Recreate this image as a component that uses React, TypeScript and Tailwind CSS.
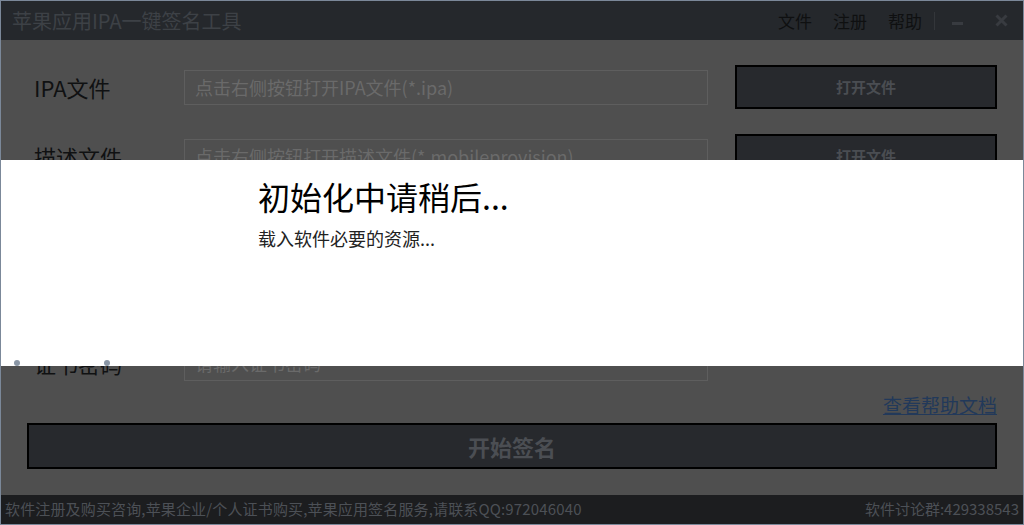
const font = { fontFamily: '"Microsoft YaHei", "Noto Sans CJK SC", "Noto Sans", sans-serif' };

// rows 3 and 4 sit under the loading panel, so they carry no text
const rows = [
  { label: "IPA文件", placeholder: "点击右侧按钮打开IPA文件(*.ipa)", button: true },
  { label: "描述文件", placeholder: "点击右侧按钮打开描述文件(*.mobileprovision)", button: true },
  { label: "", placeholder: "", button: true },
  { label: "", placeholder: "", button: false },
  { label: "证书密码", placeholder: "请输入证书密码", button: false },
];

export default function App() {
  return (
    <div
      className="relative w-[1024px] h-[525px] flex flex-col border border-[#7b8899] bg-[#4f4f4f] overflow-hidden"
      style={font}
    >
      {/* title bar */}
      <div className="h-[39px] shrink-0 flex items-center bg-[#25282c] pl-[11px] pr-[15px]">
        <span className="text-[20px] text-[#3d4146] leading-[28px]">苹果应用IPA一键签名工具</span>
        <div className="ml-auto flex items-center text-[17px] text-[#0f1011]">
          <span>文件</span>
          <span className="ml-[21px]">注册</span>
          <span className="ml-[21px]">帮助</span>
          <span className="ml-[12px] w-px h-[18px] bg-[#33363a]" />
          <span className="ml-[17px] w-[11px] h-[3px] bg-[#383b40] mt-[6px]" />
          <svg className="ml-[32px]" width="13" height="13" viewBox="0 0 13 13">
            <path d="M1.5 1.5L11.5 11.5M11.5 1.5L1.5 11.5" stroke="#383b40" strokeWidth="3" />
          </svg>
        </div>
      </div>

      {/* body */}
      <div className="flex-1 flex flex-col px-[26px] pt-[25px]">
        <div className="flex flex-col gap-[25px] pl-[7px]">
          {rows.map((r, i) => (
            <div key={i} className="h-[44px] flex items-center">
              <span className="w-[150px] text-[22px] text-[#101112]">{r.label}</span>
              <div className="w-[524px] h-[35px] border border-[#5e5e5e] flex items-center px-[10px] text-[18px] text-[#6a6a6a] whitespace-nowrap overflow-hidden">
                {r.placeholder}
              </div>
              {r.button && (
                <div className="ml-[27px] flex-1 h-[44px] border-2 border-black bg-[#27292d] flex items-center justify-center text-[15px] font-bold text-[#4a4d52]">
                  {i < 2 ? "打开文件" : ""}
                </div>
              )}
            </div>
          ))}
        </div>
        <div className="mt-[6px] flex justify-end">
          <span className="text-[19px] leading-[28px] text-[#22395a] underline">查看帮助文档</span>
        </div>
        <div className="mt-[4px] h-[46px] border-2 border-black bg-[#27292d] flex items-center justify-center text-[22px] font-bold text-[#4b4e53]">
          开始签名
        </div>
      </div>

      {/* status bar */}
      <div className="h-[29px] shrink-0 flex items-center justify-between bg-[#1c1d1f] px-[4px] text-[15px] text-[#4c5056]">
        <span className="tracking-[0.15px]">软件注册及购买咨询,苹果企业/个人证书购买,苹果应用签名服务,请联系QQ:972046040</span>
        <span>软件讨论群:429338543</span>
      </div>

      {/* loading overlay */}
      <div className="absolute left-[-1px] right-[-1px] top-[159px] h-[206px] bg-white pl-[258px] pt-[14px]">
        <div className="text-[32px] text-black leading-[44px]">初始化中请稍后...</div>
        <div className="mt-[8px] text-[18px] text-[#222] leading-[24px]">载入软件必要的资源...</div>
        <span className="absolute left-[14px] top-[200px] w-[6px] h-[6px] rounded-full bg-[#8a96a5]" />
        <span className="absolute left-[104px] top-[200px] w-[6px] h-[6px] rounded-full bg-[#8a96a5]" />
      </div>
    </div>
  );
}
